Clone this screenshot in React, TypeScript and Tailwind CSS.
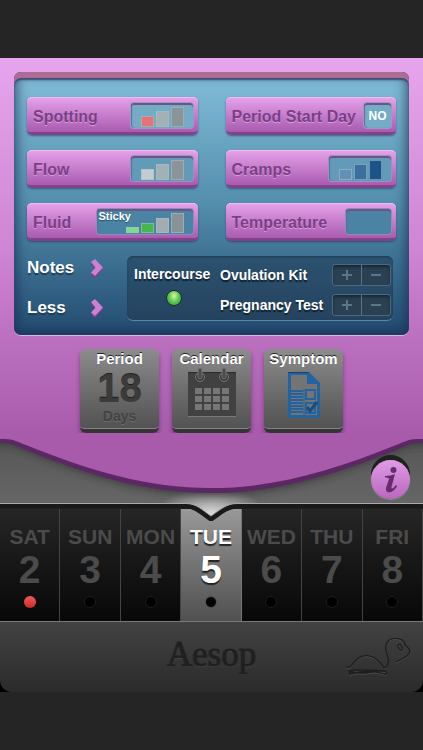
const GREY_BARS = ["bg-[#c3cdd0]", "bg-[#a3b0b4]", "bg-[#8b9498]"];

const Bars = ({ colors, heights }: { colors: string[]; heights: string[] }) => (
  <span className="flex items-end gap-[2px]">
    {colors.map((color, i) => (
      <span
        key={i}
        className={`w-[13px] border border-[#a9c0c8]/60 ${color} ${heights[i]}`}
      />
    ))}
  </span>
);

const slotClass =
  "flex h-[27px] rounded-[4px] border border-[#b08fc8]/70 shadow-[inset_0_2px_0_#6b5586,inset_1px_0_1px_#5f6d9a]";
const barHeights = ["h-[11px]", "h-[16px]", "h-[20px]"];

const Tracker = ({
  label,
  children,
}: {
  label: string;
  children: React.ReactNode;
}) => (
  <button className="flex h-[38px] items-start justify-between rounded-[5px] border-b-[3px] border-[#82428a] bg-linear-to-b from-[#e6a2ea] to-[#a95bb0] pt-[5px] pr-[4px] pl-[6px] shadow-[inset_0_1px_0_#efbff2,0_1px_2px_rgba(20,40,70,0.5)]">
    <span className="pt-[3px] text-[16px] leading-[24px] font-bold whitespace-nowrap text-[#7b3f86] [text-shadow:0_1px_0_#d79bdd]">
      {label}
    </span>
    {children}
  </button>
);

const MoreLink = ({ label }: { label: string }) => (
  <button className="flex h-6 w-[77px] items-center justify-between text-[17px] leading-[24px] font-bold text-white [text-shadow:0_2px_1px_#1d3a55]">
    {label}
    <svg width="13" height="20" viewBox="0 0 13 20" aria-hidden="true">
      <path d="M0 6 4 3 12 11 4 20 0 17 5 11Z" fill="#7d3d86" />
      <path d="M0 4 4 1 12 9.500 4 18 0 14.500 4.500 9.500Z" fill="#cd7fd3" />
    </svg>
  </button>
);

const Stepper = ({ label }: { label: string }) => (
  <div className="flex items-center justify-between">
    <span className="text-[14px] leading-[20px] font-bold whitespace-nowrap text-white [text-shadow:0_2px_1px_#10202f]">
      {label}
    </span>
    <div className="flex h-[22px] w-[59px] divide-x divide-[#54758a] rounded-[3px] border border-[#4b6a80] bg-[#2b4152] shadow-[inset_0_2px_3px_#172734]">
      <button
        aria-label={`Add ${label}`}
        className="flex flex-1 items-center justify-center"
      >
        <svg width="10" height="10" viewBox="0 0 10 10" stroke="#58778c">
          <path d="M0 5H10M5 0V10" strokeWidth="2" />
        </svg>
      </button>
      <button
        aria-label={`Remove ${label}`}
        className="flex flex-1 items-center justify-center"
      >
        <svg width="10" height="10" viewBox="0 0 10 10" stroke="#58778c">
          <path d="M0 5H10" strokeWidth="2" />
        </svg>
      </button>
    </div>
  </div>
);

const Tile = ({
  label,
  children,
}: {
  label: string;
  children: React.ReactNode;
}) => (
  <button className="flex h-[84px] w-[79px] flex-col items-center rounded-[6px] border-b-4 border-[#363336] bg-linear-to-b from-[#8c8c8c] to-[#525252] pt-[1px] shadow-[inset_0_-1px_0_#858585,0_3px_4px_rgba(70,20,80,0.5)]">
    <span className="text-[15px] leading-[18px] font-bold text-white [text-shadow:0_-1px_0_#222]">
      {label}
    </span>
    {children}
  </button>
);

const CalendarIcon = () => (
  <svg width="50" height="50" viewBox="0 0 50 50" aria-hidden="true">
    <rect x="1" y="4" width="48" height="45" fill="#414141" />
    <path d="M1 4.500H49" stroke="#2a2a2a" />
    <path d="M1 48.500H49" stroke="#777" />
    {[13, 37].map((x) => (
      <g key={x}>
        <circle cx={x} cy="9" r="4.500" fill="#383838" stroke="#777" />
        <rect x={x - 2} y="0" width="4" height="11" rx="2" fill="#4a4a4a" stroke="#777" />
      </g>
    ))}
    {[20, 28, 36].map((y) =>
      [8, 17, 26, 35].map((x) => (
        <rect key={`${x}-${y}`} x={x} y={y} width="7" height="6" fill="#777" />
      )),
    )}
  </svg>
);

const SymptomIcon = () => (
  <svg width="34" height="48" viewBox="0 0 34 48" aria-hidden="true">
    <path d="M1 1H22L33 12V47H1Z" fill="#2263a0" />
    <path d="M1 1.500H22" stroke="#163f69" />
    <path d="M4 4H20V13H30V44H4Z" fill="#747474" />
    <path d="M21 1V13H33Z" fill="#2263a0" />
    <path
      d="M4 20H16M4 23H16M4 26H16M4 29H16M4 32H16M4 35H16M4 38H16M4 41H16"
      stroke="#2263a0"
      strokeWidth="2"
    />
    <path d="M17 18V44" stroke="#2263a0" />
    <rect x="19" y="19" width="9" height="9" fill="none" stroke="#2263a0" strokeWidth="2" />
    <rect x="19" y="32" width="9" height="10" fill="none" stroke="#2263a0" strokeWidth="2" />
    <path d="M20 36 23 40 30 31" fill="none" stroke="#174d84" strokeWidth="3" />
  </svg>
);

const Turtle = () => {
  const shape =
    "M35 133H48C62 115 73 99 95 99C122 99 136 118 149 136C161 130 166 118 160 102C155 88 150 78 156 64C161 52 171 47 183 47C198 47 210 54 213 67C218 73 225 76 226 84C226 98 208 107 184 118M197 65C187 63 189 78 199 83C206 84 203 68 197 65ZM42 146C65 138 104 143 149 145C163 149 160 159 146 153C114 144 79 145 56 153C40 159 40 147 55 148C90 158 120 143 151 145";
  return (
    <svg
      width="66"
      height="43"
      viewBox="32 40 198 129"
      fill="none"
      role="img"
      aria-label="Turtle"
    >
      <path d={shape} transform="translate(0 3)" stroke="#505050" strokeWidth="3" />
      <path d={shape} stroke="#1e1e1e" strokeWidth="4" />
    </svg>
  );
};

const days = [
  { name: "SAT", date: 2, marked: true },
  { name: "SUN", date: 3 },
  { name: "MON", date: 4 },
  { name: "TUE", date: 5, active: true },
  { name: "WED", date: 6 },
  { name: "THU", date: 7 },
  { name: "FRI", date: 8 },
];

const App = () => {
  return (
    <main className="min-h-screen bg-[#252525] py-[58px] font-['Liberation_Sans',Arial,sans-serif]">
      <section className="bg-linear-to-b from-[#e6a5ec] via-[#cf86d4] to-[#a85bab] pt-[14px]">
        <div className="mx-[14px] rounded-[7px] bg-linear-to-b from-[#82bdd8] via-[#538ead] to-[#224b70] pt-[25px] pr-[13px] pb-[14px] pl-[13px] shadow-[inset_0_6px_0_#ad6c95,inset_0_8px_2px_#3b4870,inset_0_0_12px_3px_rgba(24,38,75,0.65),0_1px_0_#dab5e4]">
          <div className="grid grid-cols-2 gap-x-7 gap-y-[15px]">
            <Tracker label="Spotting">
              <span
                className={`${slotClass} w-[64px] items-end justify-end bg-[#74abc5] pr-[9px] pb-[1px]`}
              >
                <Bars
                  colors={["bg-[#e27478]", "bg-[#a3b0b4]", "bg-[#8b9498]"]}
                  heights={barHeights}
                />
              </span>
            </Tracker>
            <Tracker label="Period Start Day">
              <span
                className={`${slotClass} w-[29px] items-center justify-center bg-[#74abc5] text-[12px] font-bold text-white`}
              >
                NO
              </span>
            </Tracker>
            <Tracker label="Flow">
              <span
                className={`${slotClass} w-[64px] items-end justify-end bg-[#629bb8] pr-[9px] pb-[1px]`}
              >
                <Bars colors={GREY_BARS} heights={barHeights} />
              </span>
            </Tracker>
            <Tracker label="Cramps">
              <span
                className={`${slotClass} w-[64px] items-end justify-end bg-[#629bb8] pr-[9px] pb-[1px]`}
              >
                <Bars
                  colors={["bg-[#628fb5]", "bg-[#3a6f9f]", "bg-[#1c5489]"]}
                  heights={barHeights}
                />
              </span>
            </Tracker>
            <Tracker label="Fluid">
              <span
                className={`${slotClass} w-[98px] items-start justify-between bg-[#4a83a3] pt-[1px] pr-[9px] pl-[2px]`}
              >
                <span className="w-[26px] text-[11px] leading-[12px] font-bold text-white [text-shadow:0_1px_1px_#24506e]">
                  Sticky
                </span>
                <span className="flex self-end pb-[1px]">
                  <Bars
                    colors={[
                      "bg-[#7ddc8e]",
                      "bg-[#49b54f]",
                      "bg-[#a3acb0]",
                      "bg-[#8b9295]",
                    ]}
                    heights={["h-[6px]", "h-[10px]", "h-[15px]", "h-[20px]"]}
                  />
                </span>
              </span>
            </Tracker>
            <Tracker label="Temperature">
              <span className={`${slotClass} w-[47px] bg-[#4a83a3]`} />
            </Tracker>
          </div>

          <div className="mt-[15px] flex items-start">
            <div className="flex w-[100px] shrink-0 flex-col gap-4">
              <MoreLink label="Notes" />
              <MoreLink label="Less" />
            </div>
            <div className="mr-[3px] flex h-[65px] flex-1 rounded-[6px] border-b border-[#5e86a0] bg-linear-to-b from-[#2b5270] to-[#25435f] pt-[8px] pr-[2px] pl-[7px] shadow-[inset_0_1px_2px_#1e3b55]">
              <label className="flex w-[86px] flex-col items-start text-[14px] leading-[20px] font-bold text-white [text-shadow:0_2px_1px_#10202f]">
                Intercourse
                <input
                  type="checkbox"
                  defaultChecked
                  className="mt-[6px] ml-8 size-4 appearance-none rounded-full border border-[#163325] bg-radial-[at_50%_35%] from-[#d8f6a0] via-[#5cc552] to-[#2b9b36]"
                />
              </label>
              <div className="flex flex-1 flex-col gap-2">
                <Stepper label="Ovulation Kit" />
                <Stepper label="Pregnancy Test" />
              </div>
            </div>
          </div>
        </div>

        <div className="mt-[14px] flex justify-center gap-[13px]">
          <Tile label="Period">
            <span className="text-[40px] leading-[40px] font-bold text-[#3b3b3b] [text-shadow:0_-1px_0_#1f1f1f]">
              18
            </span>
            <span className="text-[14px] leading-[16px] font-bold text-[#434343] [text-shadow:0_1px_0_#6c6c6c]">
              Days
            </span>
          </Tile>
          <Tile label="Calendar">
            <CalendarIcon />
          </Tile>
          <Tile label="Symptom">
            <span className="pt-[3px]">
              <SymptomIcon />
            </span>
          </Tile>
        </div>
      </section>

      <div className="relative z-10 -mb-3">
        <svg
          className="block h-[88px] w-full"
          viewBox="0 0 423 88"
          preserveAspectRatio="none"
          aria-hidden="true"
        >
          <defs>
            <linearGradient id="steel" x1="0" y1="0" x2="0" y2="1">
              <stop offset="0" stopColor="#555" />
              <stop offset="1" stopColor="#6a6a6a" />
            </linearGradient>
            <radialGradient id="glow" gradientUnits="userSpaceOnUse" cx="0" cy="0" r="1" gradientTransform="translate(211 82) scale(55 28)">
              <stop offset="0" stopColor="#fff" stopOpacity="0.8" />
              <stop offset="1" stopColor="#fff" stopOpacity="0" />
            </radialGradient>
            <filter id="soft" x="-5%" y="-20%" width="110%" height="150%">
              <feGaussianBlur stdDeviation="4" />
            </filter>
            <clipPath id="plate">
              <path d="M0 0H423V71H237C227 71 220 80 211 86C202 80 196 71 186 71H0Z" />
            </clipPath>
          </defs>
          <g clipPath="url(#plate)">
            <path d="M0 0H423V88H0Z" fill="url(#steel)" />
            <path d="M0 0H423V88H0Z" fill="url(#glow)" />
            <path
              d="M-9 -9V11H6C14 11 20 15 28 18C90 43 148 62 211 62C274 62 332 43 394 18C402 15 408 11 416 11H432V-9Z"
              fill="#2c2c2c"
              opacity="0.7"
              filter="url(#soft)"
            />
            <path
              d="M0 0V10H5C13 10 18 14 26 17C90 43 148 60 211 60C274 60 332 43 396 17C404 14 409 10 417 10H423V0Z"
              fill="#5c2863"
            />
            <path
              d="M0 0V6H5C13 6 18 9 26 12C90 38 148 55 211 55C274 55 332 38 396 12C404 9 409 6 417 6H423V0Z"
              fill="#a85bab"
            />
          </g>
          <path
            d="M0 73H186C196 73 202 80 211 86C220 80 227 73 237 73H423"
            fill="none"
            stroke="#191919"
            strokeWidth="5"
          />
          <path
            d="M0 70.500H186C197 70.500 202 77 211 83C220 77 226 70.500 237 70.500H423"
            fill="none"
            stroke="#aaa"
          />
        </svg>
        <button
          aria-label="Information"
          className="absolute top-[27px] right-[13px] flex size-[39px] items-center justify-center rounded-full bg-linear-to-b from-[#e09be6] to-[#b967be] pb-[1px] shadow-[0_-5px_0_#202020,0_1px_1px_#888]"
        >
          <svg width="14" height="27" viewBox="0 0 14 27" aria-hidden="true">
            <circle cx="9.500" cy="4" r="3" fill="#652d6d" />
            <path
              d="M1 10C5 10 8 9 11 8L7.500 21C7 24 10 22 12 19L13 20C10 27 1 29 2 22L5 13C5 12 3 11.500 1 11.500Z"
              fill="#652d6d"
            />
          </svg>
        </button>
      </div>

      <nav className="grid grid-cols-7 bg-black">
        {days.map((day) => (
          <button
            key={day.name}
            className={`flex h-[112px] flex-col items-center border-r pt-[16px] font-bold ${
              day.active
                ? "border-[#777] bg-linear-to-b from-[#999] to-[#505050] text-white [text-shadow:0_2px_1px_#222]"
                : "border-[#444] bg-linear-to-b from-[#262626] to-[#080808] text-[#4b4b4b]"
            }`}
          >
            <span className="text-[21px] leading-[24px]">{day.name}</span>
            <span className="text-[39px] leading-[42px]">{day.date}</span>
            <span
              className={`mt-[5px] size-3 rounded-full ${
                day.marked
                  ? "bg-linear-to-b from-[#f05a5a] to-[#c92a2a]"
                  : day.active
                    ? "border border-[#555] bg-black"
                    : "border border-[#1c1c1c] bg-black"
              }`}
            />
          </button>
        ))}
      </nav>

      <div className="bg-black">
        <footer className="grid h-[71px] grid-cols-[1fr_auto_1fr] items-center rounded-b-[12px] border-t border-[#7a7a7a] bg-linear-to-b from-[#424242] to-[#2b2b2b]">
          <span />
          <span className="pb-[4px] font-['Liberation_Serif',serif] text-[35px] leading-[40px] text-[#202020] [-webkit-text-stroke:1px_#202020] [text-shadow:0_1px_0_#4d4d4d]">
            Aesop
          </span>
          <span className="mr-[12px] justify-self-end">
            <Turtle />
          </span>
        </footer>
      </div>
    </main>
  );
};

export default App;
